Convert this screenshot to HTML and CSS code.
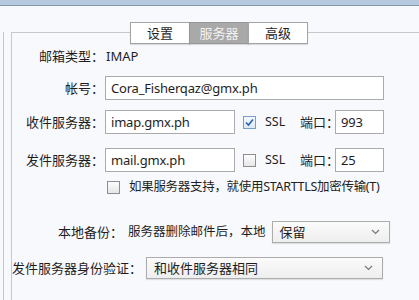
FILE: index.html
```html
<!DOCTYPE html>
<html lang="zh-CN">
<head>
    <meta charset="UTF-8">
    <title>服务器设置</title>
    <link rel="stylesheet" href="styles.css">
</head>
<body>
    <div class="titlebar"></div>
    <div class="window">
        <div class="sidebar"></div>
        <div class="panel">
            <div class="tabs">
                <div class="tab">设置</div>
                <div class="tab active">服务器</div>
                <div class="tab">高级</div>
            </div>

            <div class="row row-type">
                <span class="label">邮箱类型：</span>
                <span class="value">IMAP</span>
            </div>

            <div class="row row-account">
                <span class="label">帐号：</span>
                <div class="input wide">Cora_Fisherqaz@gmx.ph</div>
            </div>

            <div class="row row-recv">
                <span class="label">收件服务器：</span>
                <div class="input host">imap.gmx.ph</div>
                <span class="check checked">
                    <svg width="11" height="11" viewBox="0 0 11 11"><path d="M2 5.5 L4.5 8 L9 2.5" fill="none" stroke="#2a62b0" stroke-width="1.6"/></svg>
                </span>
                <span class="ssl">SSL</span>
                <span class="port-label">端口：</span>
                <div class="input port">993</div>
            </div>

            <div class="row row-send">
                <span class="label">发件服务器：</span>
                <div class="input host">mail.gmx.ph</div>
                <span class="check"></span>
                <span class="ssl">SSL</span>
                <span class="port-label">端口：</span>
                <div class="input port">25</div>
            </div>

            <div class="row row-tls">
                <span class="check"></span>
                <span class="tls-text">如果服务器支持，就使用STARTTLS加密传输(T)</span>
            </div>

            <div class="row row-backup">
                <span class="label backup-label">本地备份：</span>
                <span class="backup-text">服务器删除邮件后，本地</span>
                <div class="select backup-select">
                    <span>保留</span>
                    <svg width="9" height="6" viewBox="0 0 9 6"><path d="M1 1 L4.5 4.5 L8 1" fill="none" stroke="#777" stroke-width="1.2"/></svg>
                </div>
            </div>

            <div class="row row-auth">
                <span class="label auth-label">发件服务器身份验证：</span>
                <div class="select auth-select">
                    <span>和收件服务器相同</span>
                    <svg width="9" height="6" viewBox="0 0 9 6"><path d="M1 1 L4.5 4.5 L8 1" fill="none" stroke="#777" stroke-width="1.2"/></svg>
                </div>
            </div>
        </div>
    </div>
</body>
</html>
```

FILE: styles.css
```css
body {
    margin: 0;
    background-color: #f8f9fd;
    font-family: "Noto Sans", "Noto Sans CJK SC", sans-serif;
    font-size: 13px;
    line-height: 18px;
    color: #1e1e1e;
    overflow: hidden;
}
.titlebar {
    height: 5px;
    background-color: #b7c9df;
    border-bottom: 1px solid #8597ad;
}
.window {
    display: flex;
    height: 294px;
}
.sidebar {
    width: 3px;
    margin-top: 26px;
    border-right: 1px solid #c6c6c6;
}
.panel {
    flex: 1;
    margin-top: 26px;
    margin-left: 7px;
    border-top: 1px solid #c8c8c8;
    border-left: 1px solid #c8c8c8;
}
.tabs {
    display: flex;
    margin-top: -11px;
    margin-left: 118px;
}
.tab {
    width: 58px;
    height: 20px;
    line-height: 20px;
    text-align: center;
    background: #fff;
    border: 1px solid #a4a4a4;
    margin-right: -1px;
    box-shadow: 0 1px 1px rgba(0,0,0,0.12);
}
.tab.active {
    background: #a9a9a9;
    color: #f2f2f2;
    border-color: #969696;
}
.row {
    display: flex;
    align-items: center;
    height: 24px;
    white-space: nowrap;
}
.label {
    width: 92px;
    text-align: right;
    flex-shrink: 0;
}
.row-type {
    margin-top: 2px;
    height: 20px;
}
.value {
    margin-left: 2px;
}
.row-account {
    margin-top: 10px;
}
.row-recv {
    margin-top: 10px;
}
.row-send {
    margin-top: 14px;
}
.input {
    height: 22px;
    line-height: 22px;
    border: 1px solid #ababab;
    background: #fff;
    padding-left: 5px;
    font-size: 13px;
    letter-spacing: -0.2px;
    box-sizing: content-box;
    margin-left: 1px;
}
.wide {
    width: 272px;
}
.host {
    width: 123px;
}
.port {
    width: 42px;
    margin-left: 0;
}
.check {
    width: 11px;
    height: 11px;
    border: 1px solid #8e8e8e;
    background: linear-gradient(#fdfdfd, #e6e6e6);
    display: flex;
    align-items: center;
    justify-content: center;
    margin-left: 8px;
    flex-shrink: 0;
}
.check.checked {
    border-color: #7a9cc8;
    background: linear-gradient(#f4f8fd, #dde8f5);
}
.ssl {
    margin-left: 9px;
    width: 35px;
    font-size: 12.5px;
}
.port-label {
    width: 35px;
}
.row-tls {
    margin-top: 3px;
    height: 24px;
}
.row-tls .check {
    margin-left: 95px;
}
.tls-text {
    margin-left: 9px;
    font-size: 12.5px;
    letter-spacing: -0.3px;
}
.row-backup {
    margin-top: 22px;
    height: 22px;
}
.backup-label {
    width: 111px;
}
.backup-text {
    margin-left: 5px;
    font-size: 12.5px;
}
.select {
    height: 20px;
    border: 1px solid #acacac;
    background: linear-gradient(#fbfbfb, #eeeeee);
    box-shadow: 0 1px 1px rgba(0,0,0,0.1);
    display: flex;
    align-items: center;
    justify-content: space-between;
    padding: 0 9px 0 7px;
    font-size: 13px;
}
.backup-select {
    width: 100px;
    margin-left: 6px;
}
.row-auth {
    margin-top: 14px;
    height: 22px;
}
.auth-label {
    width: 131px;
    text-align: left;
    margin-left: 0;
}
.auth-select {
    width: 219px;
    margin-left: 3px;
}
```
